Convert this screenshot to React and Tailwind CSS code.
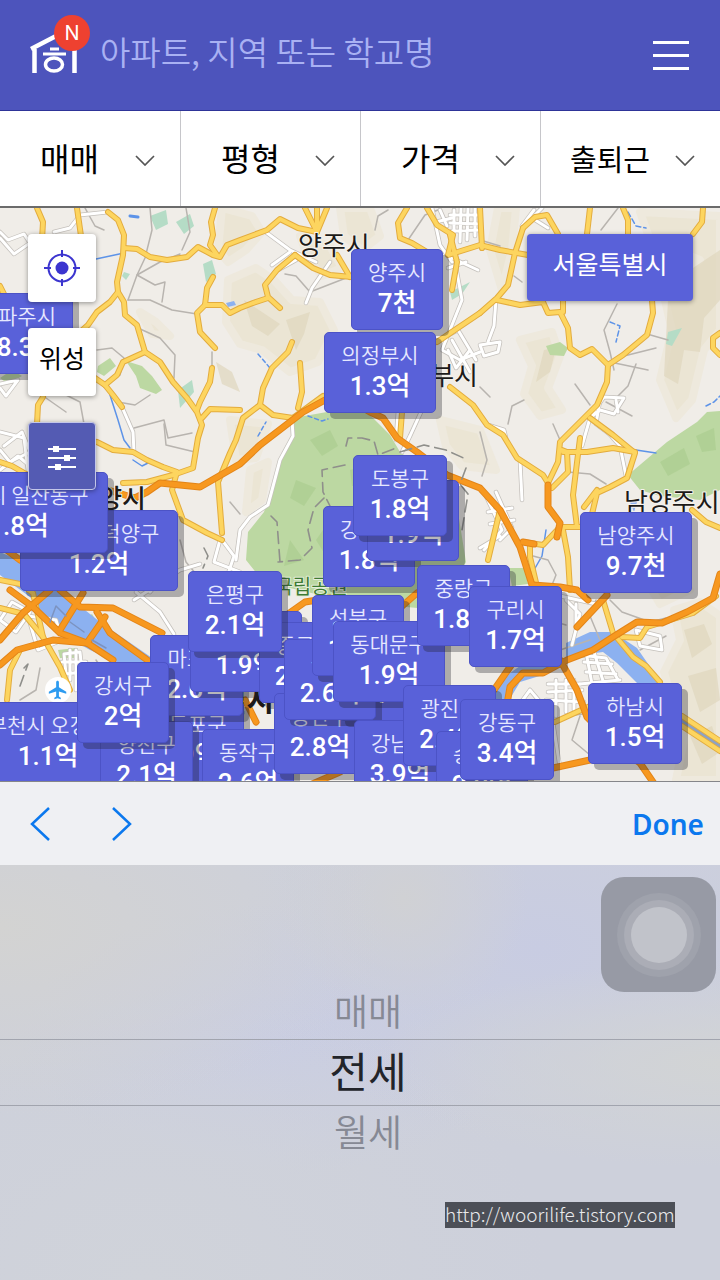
import React from 'react';
import { MdFlight } from 'react-icons/md';

const FILTERS = [
  { id: 'deal', label: '매매', options: ['매매', '전세', '월세'], wide: false },
  { id: 'size', label: '평형', options: ['평형'], wide: false },
  { id: 'price', label: '가격', options: ['가격'], wide: false },
  { id: 'commute', label: '출퇴근', options: ['출퇴근'], wide: true },
];

// x / y are the top left corner on the map canvas, later ones lie on top
const MARKERS = [
  { name: '파주시', price: '8.3천', x: -19, y: 85, w: 92 },
  { name: '고양시 덕양구', price: '1.2억', x: 20, y: 302, w: 158 },
  { name: '고양시 일산동구', price: '1.8억', x: -71, y: 264, w: 179 },
  { name: '양주시', price: '7천', x: 351, y: 41, w: 92 },
  { name: '의정부시', price: '1.3억', x: 324, y: 124, w: 112 },
  { name: '강북구', price: '1.8억', x: 323, y: 298, w: 92 },
  { name: '노원구', price: '1.9억', x: 367, y: 272, w: 92 },
  { name: '도봉구', price: '1.8억', x: 353, y: 247, w: 94 },
  { name: '영등포구', price: '1.9억', x: 132, y: 493, w: 112 },
  { name: '부천시 오정구', price: '1.1억', x: -31, y: 494, w: 158 },
  { name: '양천구', price: '2.1억', x: 100, y: 513, w: 93 },
  { name: '동작구', price: '2.6억', x: 202, y: 521, w: 92 },
  { name: '마포구', price: '2.6억', x: 150, y: 427, w: 93 },
  { name: '강서구', price: '2억', x: 77, y: 454, w: 92 },
  { name: '서대문구', price: '1.9억', x: 190, y: 403, w: 112 },
  { name: '종로구', price: '2.3억', x: 259, y: 414, w: 92 },
  { name: '은평구', price: '2.1억', x: 188, y: 363, w: 94 },
  { name: '용산구', price: '2.8억', x: 274, y: 485, w: 92 },
  { name: '성동구', price: '3.7억', x: 339, y: 432, w: 92 },
  { name: '중구', price: '2.6억', x: 284, y: 431, w: 92 },
  { name: '성북구', price: '1.9억', x: 312, y: 387, w: 92 },
  { name: '동대문구', price: '1.9억', x: 333, y: 413, w: 112 },
  { name: '중랑구', price: '1.8억', x: 417, y: 357, w: 93 },
  { name: '구리시', price: '1.7억', x: 469, y: 378, w: 93 },
  { name: '강남구', price: '3.9억', x: 354, y: 512, w: 92 },
  { name: '광진구', price: '2.4억', x: 403, y: 477, w: 93 },
  { name: '송파구', price: '2.9억', x: 436, y: 523, w: 92 },
  { name: '강동구', price: '3.4억', x: 460, y: 491, w: 94 },
  { name: '남양주시', price: '9.7천', x: 580, y: 304, w: 112 },
  { name: '하남시', price: '1.5억', x: 588, y: 475, w: 94 },
];

const YELLOW_ROADS = [
  'M37 208 43 222 42 240',
  'M77 208 81 236',
  'M108 212 118 220 124 235 123 255 117 282 118 292 110 302 97 312 88 325 78 334',
  'M124 248 137 249 150 257 167 260 187 257 198 247 213 255 220 257 227 245 240 240 267 230 280 219 298 228 317 232',
  'M215 208 211 222 213 235 210 245 217 255',
  'M118 292 124 302 125 315 137 325 145 352 160 362 173 382 187 398 197 412 202 425 198 438 193 468 173 475 147 482 123 483',
  'M145 352 123 362 117 375 105 385 92 376',
  'M105 385 113 395 122 407',
  'M213 277 207 288 205 305 197 313 200 332 215 348',
  'M205 305 222 305 230 313 240 308 253 303 268 298',
  'M212 368 210 382 200 402 197 410',
  'M202 418 210 409 240 410',
  'M260 405 243 418 236 440 230 453 218 482 222 533',
  'M97 442 113 450 133 452 147 460 163 467 177 472 172 490 183 520 207 533 222 540',
  'M43 397 38 405 37 424',
  'M0 462 12 466 26 474',
  'M0 286 5 296',
  'M305 208 317 232 327 208',
  'M317 208V232',
  'M407 208 398 223 400 238 412 243 427 252',
  'M427 208 437 225 453 235 448 255 480 245 500 250 528 255',
  'M450 235 457 262 452 290',
  'M295 255 277 270 265 285 268 297 280 308',
  'M295 255 313 268 330 275 352 277',
  'M337 255 350 277',
  'M292 342 288 352 272 368 263 388 260 405 273 415 293 418 323 396',
  'M300 363 302 392 298 408',
  'M480 313 437 342',
  'M450 387 473 405 487 425 503 435 517 458 543 475 548 483',
  'M402 412 400 438',
  'M480 208 482 248',
  'M523 228 515 253 508 285 497 298 480 313',
  'M523 228 535 217 547 215 558 234',
  'M590 208 587 234',
  'M623 208 628 220 628 234',
  'M703 208 702 222 693 234',
  'M497 300 520 305 543 302 548 313 560 312 568 328 570 348 580 355 592 349 608 365',
  'M563 300V312',
  'M652 300 653 313 647 335 623 355 608 365 607 382 597 405 560 442 558 462 548 483',
  'M590 418 613 435 635 453 627 478 610 487 597 493 592 514',
  'M562 450 567 452 568 472 552 488',
  'M580 438 573 495 577 527',
  'M563 452 587 452 613 448 635 452',
  'M720 333 713 338 713 348 720 355',
  'M563 530 568 557 570 590',
  'M530 543 530 557 537 587',
  'M523 542 543 545 560 527 580 527',
  'M597 490 584 507',
  'M603 600 613 633 633 657 646 666 660 682',
  'M622 637 640 638 647 627 693 613 716 596',
  'M682 716 720 741',
  'M682 726 720 751',
  'M555 722 590 706',
  'M692 510 706 522 720 528',
  'M500 510 488 560',
  'M0 580 20 584 33 593 43 637 60 667 70 690',
  'M0 608 24 614 43 637',
  'M20 650 10 670 7 700',
];

const ORANGE_ROADS = [
  'M108 490 135 498 147 492 160 483 200 487 240 464 260 445 303 412 325 400 345 397 370 412 383 418 397 438 417 452 447 475 480 488 500 510 520 547 532 585 546 640',
  'M548 485 548 507 560 523 557 537',
  'M523 542 534 544',
  'M533 585 560 587 577 590 588 600',
  'M577 627 607 595',
  'M720 574 713 598 687 612 662 623 637 622 613 637 593 650 567 660 543 673 523 673 510 687 507 704',
  'M560 660 577 690 587 717 615 745 640 763 655 785',
  'M512 664 494 690',
  'M553 768 590 760',
  'M0 545 20 560',
  'M0 640 23 613 50 590',
  'M10 590 33 607 60 633 87 643 113 660',
  'M0 665 17 650 53 640 87 643',
  'M60 630 83 593',
  'M60 590 80 607 113 608 162 633',
  'M87 643 105 617',
  'M97 612 110 633 150 662',
  'M288 614 305 602 330 598',
  'M400 608 417 593',
  'M245 700 256 722',
  'M310 785 340 772',
];

const WHITE_ROADS = [
  'M0 238 14 254 30 243 24 234 8 240 0 232',
  'M54 232 70 228 80 215 108 212',
  'M122 407 133 432 134 452',
  'M0 384 18 380 6 396 0 388',
  'M0 432 24 438 28 470',
  'M4 446 22 432 30 452 10 462 0 450',
  'M0 470 18 456 30 466',
  'M267 233 290 250 316 262',
  'M272 265 290 252M278 270 296 260',
  'M306 303 312 288 330 262',
  'M292 420 293 436 280 460 271 494 268 505 250 517 240 530 236 560',
  'M432 208 440 245 452 262',
  'M454 210V232M461 208 460 242M468 208 467 240M475 208V236M450 215H480M450 223 480 224M452 231 480 230',
  'M440 210 447 226M436 222 452 218',
  'M455 262 462 300 450 330 442 350 460 360 480 352',
  'M443 338 458 330 476 360M448 350 456 368 470 350M452 340 470 372',
  'M452 258 478 270M448 268 466 262',
  'M421 412 410 436 402 452',
  'M398 412 396 440',
  'M522 226 534 210M528 222 542 208M532 218 548 228',
  'M496 300 494 326 488 342M480 345 500 342 498 352 484 356Z',
  'M592 414 604 397 624 398 614 414 600 410 590 418 606 430 620 446 626 476',
  'M600 400 596 424 612 436M616 400 618 412M590 418 582 446',
  'M488 425 504 430 506 438M520 460 522 500',
  'M486 496 502 530 484 550M496 492 512 528 500 540M488 512 512 508M490 524 514 520M480 548 500 536',
  'M222 540 234 556 226 580M220 540 214 562 240 572',
  'M136 592 160 612 174 634M134 600 180 570 200 564M150 592 168 570',
  'M0 620 12 602 30 612 16 632ZM28 616 56 620 62 640 38 650Z',
  'M64 654 80 652 82 672 66 674ZM70 650V680M76 650V690M62 662H86',
  'M580 655 606 658 618 680M586 652 592 684M594 652 604 684M584 662 612 664M586 672 616 674M580 684 620 680',
  'M548 684H580M548 692 582 690M546 700 584 702M556 680V716M566 680V712M574 680V710',
  'M566 600 580 614 572 645M560 596 596 604M576 604V626',
  'M530 690 514 712M530 690 552 716 560 768',
  'M636 630 660 636 662 650 640 646Z',
];

const GREY_ROADS = [
  'M150 208 152 230 145 258 137 275 128 300',
  'M137 275 160 262 180 254M137 275 155 285 165 282 162 302',
  'M128 300 150 300 172 310 197 314',
  'M138 328 160 338 175 355 174 378',
  'M97 350 112 348 124 358 120 375',
  'M118 402 135 405 150 395M134 428 164 420 168 438 192 433',
  'M164 424 166 445 195 452',
  'M84 335 92 342 86 362M85 208 95 226 104 230',
  'M60 392 80 402 84 424M46 398 66 412',
  'M186 208 190 232 182 250M0 326 20 322 27 310',
  'M212 352 212 368',
  'M346 278 310 292 296 276 285 274M375 230 378 216 388 210',
  'M408 240 425 215 438 210M412 252 408 266',
  'M480 240 500 246M514 276 522 282M601 230 618 208',
  'M617 304 604 330 610 352 614 370M647 334 668 340M624 356 656 348M610 362 648 370',
  'M575 384 590 405M636 364 628 386 618 396M606 402 632 416',
  'M553 424 560 440M480 387 490 397M524 400 512 406 508 424',
  'M480 432 487 460 482 476M568 472 590 474 606 484',
  'M0 540 12 524M180 540 186 562 196 574M230 502 240 514',
  'M533 556 548 560 556 575 550 590M610 600 622 612 650 622 666 618',
  'M596 600 590 616 600 640M560 650 590 640M580 716 572 740 590 755',
  'M40 668 36 690 20 700M96 660 104 672',
  'M480 600 566 625M640 650 666 636M566 716 600 712',
];

const HILLS = [
  'M222 208 252 216 262 232 246 250 228 262 218 250Z',
  'M228 280 256 268 274 280 292 300 320 302 334 330 318 362 290 372 262 350 240 344 226 322Z',
  'M300 236 330 246 342 268 322 276 308 258Z',
  'M340 208 370 208 380 236 362 250 344 236Z',
  'M498 208 516 208 512 250 502 290 490 250Z',
  'M520 340 552 332 560 356 548 388 562 410 540 416 524 394 532 366Z',
  'M640 212 720 216 720 330 704 350 692 400 676 418 660 380 672 330 664 296 700 260 650 240Z',
  'M230 420 268 424 256 458 236 460Z',
  'M674 610 700 602 720 616 720 780 676 780 684 740 672 700 664 672 680 640Z',
  'M140 312 156 322 170 336 152 334Z',
  'M440 420 480 430 496 470 462 466 446 446Z',
  'M634 560 668 568 690 590 660 604Z',
  'M250 470 268 462 262 500 246 512Z',
];

const SHADED_HILLS = [
  'M668 300 690 270 720 250 720 300 704 318 700 352 684 350 678 384 664 376Z',
  'M244 300 262 312 280 324 268 336 252 326Z',
  'M286 320 310 312 304 334 296 350Z',
  'M544 350 556 348 550 372 536 382Z',
  'M684 630 704 624 712 644 692 658Z',
  'M688 676 716 668 720 700 700 712Z',
  'M690 736 712 726 720 752 702 764Z',
  'M216 362 232 372 240 392 222 384Z',
];

const GREENS = [
  'M293 418 327 412 367 412 390 435 400 452 430 474 456 500 466 562 440 610 350 602 290 588 262 580 246 560 248 532 264 512 271 490 280 462 292 438Z',
  'M628 475 667 442 697 422 707 412 720 411 720 490 700 500 660 496 640 490Z',
  'M126 361 142 366 152 376 162 390 156 394 140 388 136 376Z',
  'M98 366 110 358 116 366 104 376 97 372Z',
  'M546 346 560 342 568 348 564 356 550 355Z',
  'M508 568 525 568 528 584 512 586Z',
  'M80 622 92 614 98 624 88 630Z',
  'M58 650 76 648 74 658 60 658Z',
  'M0 378 12 370 22 376 8 384Z',
];

const TEALS = [
  'M150 216 166 210 168 224 156 230ZM176 222 190 214 194 226 184 234Z',
  'M203 264 212 260 216 274 206 282Z',
  'M178 390 192 380 194 392 180 408Z',
  'M450 292 470 282 462 294 452 300Z',
  'M668 332 682 328 672 346 666 344Z',
  'M124 272 130 274 126 280 122 276Z',
];

const PARK_TRAILS = [
  'M346 446 348 438 362 438 374 441 378 455 396 448',
  'M345 465 322 470 323 492 330 506M400 452 424 445 446 450 468 460',
  'M271 516 277 522 280 562M324 498 314 508 308 530 312 548 300 560 278 562',
  'M466 468 460 484 468 494 462 530',
  'M204 548 208 556 203 568M24 668 28 664 20 686',
];

const MAP_LABELS = [
  { text: '양주시', x: 298, y: 255, anchor: 'start', weight: 400 },
  { text: '의정부시', x: 478, y: 385, anchor: 'end', weight: 400 },
  { text: '고양시', x: 146, y: 508, anchor: 'end', weight: 500 },
  { text: '남양주시', x: 624, y: 512, anchor: 'start', weight: 400 },
];

const Paths = ({ list, ...rest }) => (
  <g {...rest}>
    {list.map((d) => (
      <path key={d} d={d} />
    ))}
  </g>
);

const MapCanvas = () => (
  <svg
    className="absolute inset-0 h-full w-full"
    viewBox="0 208 720 573"
    preserveAspectRatio="xMidYMin slice"
    strokeLinejoin="round"
    strokeLinecap="round"
    aria-hidden="true"
  >
    <rect x="0" y="208" width="720" height="573" fill="#f0ede8" />
    <Paths list={HILLS} fill="#ebe5d4" stroke="#eee9dd" strokeWidth="8" />
    <Paths list={SHADED_HILLS} fill="#e0d7be" opacity="0.7" />
    <Paths list={GREENS} fill="#bcd8a2" />
    <g fill="#a9cb8c" opacity="0.6">
      <path d="M310 440 330 430 338 446 322 456ZM350 470 376 462 370 484 352 486ZM296 480 316 488 304 506 290 498ZM330 520 344 540 326 556 316 540ZM290 540 304 560 284 566Z" />
      <path d="M660 462 684 448 690 464 668 476ZM696 436 714 428 716 450 702 452Z" />
    </g>
    <Paths list={TEALS} fill="#b5dcc6" />

    {/* Rivers */}
    <g fill="#8cb1f0">
      <path d="M0 552 25 563 60 590 100 622 155 660 130 668 90 650 55 630 30 597 0 575Z" />
      <path d="M566 643 590 632 613 632 637 648 662 684 640 686 617 663 603 652 580 655 566 664Z" />
      <path d="M548 664 520 666 500 680 492 700 508 702 520 682 546 674Z" />
      <path d="M226 303 234 301 236 305 228 307Z" />
      <path d="M629 500 637 502 634 512Z" />
    </g>
    <path d="M682 721 720 746" stroke="#8ea2c4" strokeWidth="4" fill="none" />
    <g fill="none" stroke="#5d93e8" strokeWidth="1.5">
      <path d="M96 259 110 256 124 253M110 395 118 420 124 440 130 448M133 460 142 466 150 462" />
      <path d="M130 216 138 217" strokeWidth="3" />
      <path d="M308 416 322 421 328 419M258 354 270 368M258 436 266 422" strokeDasharray="4 3" />
      <path d="M628 212 636 226 646 228M610 322 620 326 616 342M706 406 714 402 720 396" strokeDasharray="5 3" />
      <path d="M546 530 542 556 534 570M636 450 656 453" />
    </g>

    {/* Roads */}
    <Paths list={GREY_ROADS} fill="none" stroke="#b8b4af" strokeWidth="1.5" />
    <Paths list={WHITE_ROADS} fill="none" stroke="#c4c0bb" strokeWidth="4.5" />
    <Paths list={WHITE_ROADS} fill="none" stroke="#ffffff" strokeWidth="3" />
    <Paths list={YELLOW_ROADS} fill="none" stroke="#e3ac3e" strokeWidth="6" />
    <Paths list={YELLOW_ROADS} fill="none" stroke="#fdd55f" strokeWidth="4" />
    <Paths list={ORANGE_ROADS} fill="none" stroke="#e38519" strokeWidth="7" />
    <Paths list={ORANGE_ROADS} fill="none" stroke="#f7981f" strokeWidth="5" />
    <Paths list={PARK_TRAILS} fill="none" stroke="#8f8f8b" strokeWidth="1.6" strokeDasharray="12 6" />
    <path d="M50 622 56 606 66 616M70 622 84 632M92 640 106 648" fill="none" stroke="#7c93c0" strokeWidth="1.5" />

    {/* Airport */}
    <circle cx="58" cy="690" r="13" fill="#ffffff" />
    <MdFlight x="47" y="679" size={22} color="#2d9bf0" />

    <g className="font-['Noto_Sans_CJK_KR',sans-serif]" fill="#1c1a18">
      {MAP_LABELS.map((l) => (
        <text
          key={l.text}
          x={l.x}
          y={l.y}
          textAnchor={l.anchor}
          fontSize="26"
          fontWeight={l.weight}
          stroke="#f5f2ec"
          strokeWidth="2"
          paintOrder="stroke"
        >
          {l.text}
        </text>
      ))}
      <text x="348" y="594" textAnchor="end" fontSize="20" fill="#3d7a34" stroke="#e4eed8" strokeWidth="2" paintOrder="stroke">
        북한산국립공원
      </text>
      <text x="274" y="711" textAnchor="end" fontSize="30" fontWeight="700">
        서울특별시
      </text>
    </g>
  </svg>
);

const Marker = ({ name, price, x, y, w }) => (
  <button
    type="button"
    className="absolute flex h-[81px] flex-col items-center rounded-[5px] border border-[#4c53c6] bg-[#5961d9] pt-1.5 whitespace-nowrap text-white shadow-[6px_6px_0_rgba(30,30,40,0.32)]"
    style={{ left: x, top: y, width: w }}
  >
    <span className="text-[21px] leading-[30px] font-[350] text-[#e6e8ff]">{name}</span>
    <span className="font-[Roboto,'Noto_Sans_CJK_KR',sans-serif] text-[26px] leading-[34px] font-medium">{price}</span>
  </button>
);

const Logo = () => (
  <a href="#" aria-label="호갱노노" className="relative mb-[18px] block h-[60px] w-[60px] shrink-0">
    <svg className="h-full w-full" viewBox="30 16 60 60" fill="none" stroke="#ffffff">
      <path d="M31 49 58 35 78 46" strokeWidth="4.5" strokeLinejoin="round" />
      <path d="M34.500 49V73M74.500 48V73" strokeWidth="4.500" />
      <path d="M50 49H59M43 54H66" strokeWidth="3" />
      <ellipse cx="54" cy="64.500" rx="8.500" ry="6.500" strokeWidth="3.500" />
    </svg>
    <span className="absolute -top-px right-0 flex h-9 w-9 items-center justify-center rounded-full bg-[#ee4130] font-[Inter,sans-serif] text-xl leading-none text-white">
      N
    </span>
  </a>
);

const Header = () => (
  <header className="flex h-[111px] items-center border-b border-[#2e3498] bg-[#4d54bc] pr-[31px] pl-[30px]">
    <Logo />
    <input
      type="search"
      aria-label="검색"
      placeholder="아파트, 지역 또는 학교명"
      className="ml-2.5 min-w-0 flex-1 bg-transparent pb-2 text-[33px] leading-[48px] font-[350] text-white outline-none placeholder:text-[#a9b1f3]"
    />
    <button type="button" aria-label="메뉴" className="flex w-9 shrink-0 flex-col gap-2.5">
      <span className="h-[3px] w-full bg-white" />
      <span className="h-[3px] w-full bg-white" />
      <span className="h-[3px] w-full bg-white" />
    </button>
  </header>
);

const FilterBar = () => (
  <nav className="grid h-[97px] grid-cols-4 border-b-2 border-[#6b6b6b] bg-white">
    {FILTERS.map((f) => (
      <div key={f.id} className="relative border-[#c6c6ca] not-first:border-l">
        <select
          aria-label={f.label}
          className={
            f.wide
              ? 'h-full w-full appearance-none bg-transparent pl-[29px] text-[29px] text-black'
              : 'h-full w-full appearance-none bg-transparent pb-1 pl-10 text-[32px] text-black'
          }
        >
          {f.options.map((o) => (
            <option key={o}>{o}</option>
          ))}
        </select>
        <svg
          className="pointer-events-none absolute top-[43px] right-[25px] h-3 w-5"
          viewBox="0 0 20 12"
          fill="none"
          stroke="#555555"
          strokeWidth="1.7"
        >
          <path d="M1 2 10 11 19 2" />
        </svg>
      </div>
    ))}
  </nav>
);

const MapControls = () => (
  <div className="absolute top-[26px] left-[28px] flex flex-col gap-[26px]">
    <button
      type="button"
      aria-label="현재 위치"
      className="flex h-[68px] w-[68px] items-center justify-center rounded-[4px] bg-white shadow-[0_1px_5px_rgba(0,0,0,0.4)]"
    >
      <svg className="h-[38px] w-[38px]" viewBox="0 0 38 38" fill="none" stroke="#3c35cf" strokeWidth="2">
        <circle cx="19" cy="19" r="13.500" />
        <circle cx="19" cy="19" r="6.500" fill="#3c35cf" stroke="none" />
        <path d="M19 1V8M19 30V37M1 19H8M30 19H37" />
      </svg>
    </button>
    <button
      type="button"
      className="flex h-[68px] w-[68px] items-center justify-center rounded-[4px] bg-white pb-2 text-[25px] text-black shadow-[0_1px_5px_rgba(0,0,0,0.4)]"
    >
      위성
    </button>
    <button
      type="button"
      aria-label="상세 필터"
      className="flex h-[68px] w-[68px] items-center justify-center rounded-[4px] border border-[#c3c6e8] bg-[#545bb3] pt-1 shadow-[0_1px_5px_rgba(0,0,0,0.4)]"
    >
      <svg className="h-7 w-7" viewBox="0 0 28 28" fill="#ffffff">
        <path d="M0 4H28V6H0ZM0 13H28V15H0ZM0 22H28V24H0Z" />
        <path d="M5 2H11V8H5ZM16 11H22V17H16ZM7 20H13V26H7Z" />
      </svg>
    </button>
  </div>
);

const MapView = () => (
  <main className="relative min-h-[573px] flex-1 overflow-hidden">
    <MapCanvas />
    {MARKERS.map((m) => (
      <Marker key={m.name} {...m} />
    ))}
    <MapControls />
    <button
      type="button"
      className="absolute top-[26px] right-[27px] h-[67px] w-[166px] rounded-[4px] bg-[#5961d9] pb-2 text-[25px] text-white shadow-[0_1px_5px_rgba(0,0,0,0.4)]"
    >
      서울특별시
    </button>
  </main>
);

const PickerToolbar = () => (
  <div className="flex h-[84px] items-center border-t border-[#85868a] bg-[#eff0f3] pr-4 pl-[30px] text-[#0b78ee]">
    <button type="button" aria-label="이전" className="mr-[62px]">
      <svg className="h-9 w-5" viewBox="0 0 20 36" fill="none" stroke="currentColor" strokeWidth="2.500">
        <path d="M19 2 2 18 19 34" />
      </svg>
    </button>
    <button type="button" aria-label="다음">
      <svg className="h-9 w-5" viewBox="0 0 20 36" fill="none" stroke="currentColor" strokeWidth="2.500">
        <path d="M1 2 18 18 1 34" />
      </svg>
    </button>
    <button type="button" className="ml-auto font-['Noto_Sans',sans-serif] text-[28px] font-semibold">
      Done
    </button>
  </div>
);

const Picker = () => (
  <section className="relative flex h-[415px] flex-col bg-[#cdd0db] bg-[radial-gradient(ellipse_at_0%_15%,#d3d3d2_0%,transparent_38%),radial-gradient(ellipse_at_56%_8%,#d0d1d4_0%,transparent_22%),radial-gradient(ellipse_at_100%_48%,#d2d4d5_0%,transparent_34%),radial-gradient(ellipse_at_20%_100%,#d0d3da_0%,transparent_50%),radial-gradient(ellipse_at_75%_20%,#c8cce2_0%,transparent_40%),radial-gradient(ellipse_at_38%_42%,#c9cde3_0%,transparent_40%)] pt-[120px]">
    <div role="group" aria-label="거래 유형" className="flex flex-col text-[#868994]">
      <button type="button" className="h-[54px] pb-1 pl-4 text-[37px] leading-[50px] font-[350]">
        매매
      </button>
      <button
        type="button"
        aria-pressed="true"
        className="h-[67px] border-y border-[#a1a4ae] pb-1.5 pl-4 text-[42px] leading-[58px] text-[#22242a]"
      >
        전세
      </button>
      <button type="button" className="h-[54px] pb-1 pl-4 text-[37px] leading-[50px] font-[350]">
        월세
      </button>
    </div>

    {/* Floating assistive button */}
    <button
      type="button"
      aria-label="AssistiveTouch"
      className="absolute top-3 right-1 flex h-[115px] w-[115px] items-center justify-center rounded-[23px] bg-[#979aa5]"
    >
      <span className="flex h-[84px] w-[84px] items-center justify-center rounded-full bg-[#9fa2ac]">
        <span className="flex h-[70px] w-[70px] items-center justify-center rounded-full bg-[#abadb6]">
          <span className="h-14 w-14 rounded-full bg-[#c1c3ca]" />
        </span>
      </span>
    </button>

    <a
      href="http://woorilife.tistory.com"
      className="absolute right-[45px] bottom-[52px] h-[26px] w-[230px] overflow-hidden bg-[#4c4f57] text-[19px] leading-[24px] font-light whitespace-nowrap text-[#e9eaec]"
    >
      http://woorilife.tistory.com
    </a>
  </section>
);

const App = () => {
  return (
    <div className="flex min-h-screen flex-col bg-white font-['Noto_Sans_CJK_KR',sans-serif]">
      <Header />
      <FilterBar />
      <MapView />
      <PickerToolbar />
      <Picker />
    </div>
  );
};

export default App;
